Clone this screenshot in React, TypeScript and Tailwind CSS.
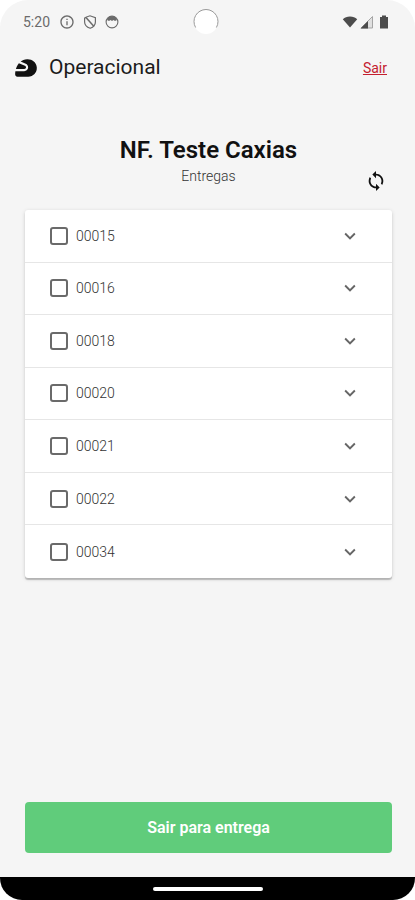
import React, { useState } from "react";
import {
  MdExpandMore,
  MdInfoOutline,
  MdSportsMotorsports,
  MdSync,
} from "react-icons/md";

const deliveries = [
  "00015",
  "00016",
  "00018",
  "00020",
  "00021",
  "00022",
  "00034",
];

const StatusBar: React.FC = () => (
  <div className="grid grid-cols-[1fr_auto_1fr] items-center h-11 pl-[23px] pr-[26px] text-[#6b6b6b]">
    <div className="flex items-center gap-2">
      <span className="w-7 text-sm">5:20</span>
      <MdInfoOutline className="w-4 h-4" />
      <svg
        viewBox="0 0 14 14"
        className="w-[14px] h-[14px]"
        fill="none"
        stroke="currentColor"
        strokeWidth="1.2"
      >
        <path d="M3.500 2 7 .8 12.400 2.700V7c0 3-2.200 5.200-5.200 6.300C4 12.200 1.600 10 1.600 7V3.200Z" />
        <path d="M3 2.500 11 11.500" strokeWidth="1.5" />
      </svg>
      <svg viewBox="0 0 14 14" className="w-[14px] h-[14px]">
        <circle
          cx="7"
          cy="7"
          r="5.9"
          fill="none"
          stroke="currentColor"
          strokeWidth="1.1"
        />
        <path
          d="M2 5C2.800 2.500 4.500 1.300 7 1.300S11.200 2.500 12 5L10 6 8.500 5 7 6 5.500 5 4 6Z"
          fill="currentColor"
        />
      </svg>
    </div>
    <svg viewBox="0 0 26 26" className="w-[26px] h-[26px]" fill="none">
      <circle cx="13" cy="13" r="12" fill="#fff" />
      <path
        d="M2.600 18.500A12 12 0 1 1 23.400 18.500"
        stroke="#9a9a9a"
        strokeWidth="1"
      />
    </svg>
    <div className="flex items-center justify-end gap-[2px] text-[#4c4c4c]">
      <svg viewBox="0 0 16 14" className="w-4 h-[14px]" fill="currentColor">
        <path d="M8 12.500.8 4.300C2.800 2.300 5 1.400 8 1.400s5.200.9 7.200 2.900Z" />
      </svg>
      <svg viewBox="0 0 14 14" className="w-[14px] h-[14px]">
        <path
          d="M1 13 12.500 1.500V13Z"
          fill="#e0e0e0"
          stroke="#a5a5a5"
          strokeWidth="1"
        />
        <path d="M.5 13.500 8 6v7.500Z" fill="currentColor" />
      </svg>
      <svg
        viewBox="0 0 10 14"
        className="w-[10px] h-[14px] ml-[3px]"
        fill="currentColor"
      >
        <path d="M3 .5h4V2h2v11.500H1V2h2Z" />
      </svg>
    </div>
  </div>
);

const Header: React.FC = () => (
  <header className="flex items-center justify-between h-12 pl-[13px] pr-7">
    <div className="flex items-center gap-[10px]">
      <MdSportsMotorsports className="w-[26px] h-[26px] text-[#111]" />
      <h1 className="text-[21px] text-[#1c1c1c]">Operacional</h1>
    </div>
    <a href="#sair" className="text-sm text-[#c4202f] underline">
      Sair
    </a>
  </header>
);

interface DeliveryRowProps {
  code: string;
  checked: boolean;
  onToggle: () => void;
}

const DeliveryRow: React.FC<DeliveryRowProps> = ({
  code,
  checked,
  onToggle,
}) => (
  <li className="flex items-center justify-between pl-[25px] pr-[31px] border-b border-[#e6e6e6] last:border-b-0">
    <label className="flex items-center gap-2 text-sm font-light text-[#333]">
      <input
        type="checkbox"
        checked={checked}
        onChange={onToggle}
        className="appearance-none w-[18px] h-[18px] rounded-[3px] border-2 border-[#6a6a6a] checked:bg-[#6a6a6a]"
      />
      {code}
    </label>
    <button type="button" aria-label={`Abrir ${code}`}>
      <MdExpandMore className="w-[22px] h-[22px] text-[#666]" />
    </button>
  </li>
);

export default function App() {
  const [selected, setSelected] = useState<string[]>([]);

  const toggle = (code: string) => {
    setSelected((prev) =>
      prev.includes(code) ? prev.filter((c) => c !== code) : [...prev, code],
    );
  };

  return (
    <div className="min-h-screen bg-white font-['Roboto',sans-serif]">
      <div className="flex flex-col min-h-screen overflow-hidden rounded-t-[28px] rounded-b-[22px] bg-[#f5f5f5]">
        <StatusBar />
        <Header />

        <main className="flex flex-col flex-1 pl-[25px] pr-[23px] pt-[42px] pb-6">
          <div className="text-center">
            <h2 className="text-2xl font-semibold text-[#111]">
              NF. Teste Caxias
            </h2>
            <p className="text-sm font-light text-[#333]">Entregas</p>
          </div>
          <div className="flex justify-end -mt-4 pr-[5px]">
            <button type="button" aria-label="Atualizar">
              <MdSync className="w-[22px] h-[22px] text-[#111]" />
            </button>
          </div>

          <ul className="grid auto-rows-fr min-h-[368px] mt-[18px] bg-white rounded-[3px] shadow-[0_2px_1px_rgba(0,0,0,0.2),0_1px_4px_rgba(0,0,0,0.14)]">
            {deliveries.map((code) => (
              <DeliveryRow
                key={code}
                code={code}
                checked={selected.includes(code)}
                onToggle={() => toggle(code)}
              />
            ))}
          </ul>

          <button
            type="button"
            className="w-full h-[51px] mt-auto rounded-sm bg-[#60cc7b] text-base font-semibold text-white"
          >
            Sair para entrega
          </button>
        </main>

        <div className="flex items-center justify-center h-[23px] bg-black">
          <div className="w-[110px] h-1 rounded-full bg-white" />
        </div>
      </div>
    </div>
  );
}
